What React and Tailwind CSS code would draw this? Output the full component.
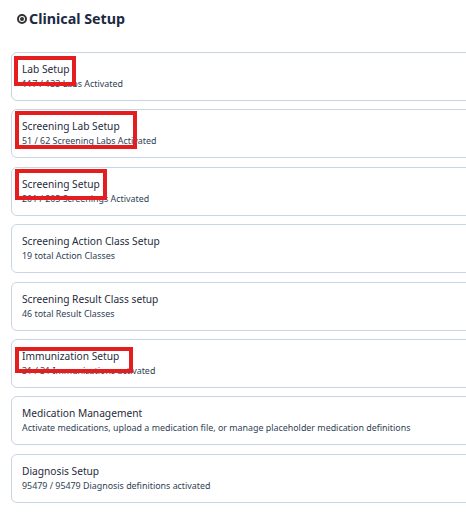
import React from 'react'

const setupItems = [
  { title: 'Lab Setup', detail: '117 / 133 Labs Activated' },
  { title: 'Screening Lab Setup', detail: '51 / 62 Screening Labs Activated' },
  { title: 'Screening Setup', detail: '201 / 205 Screenings Activated' },
  { title: 'Screening Action Class Setup', detail: '19 total Action Classes' },
  { title: 'Screening Result Class setup', detail: '46 total Result Classes' },
  { title: 'Immunization Setup', detail: '31 / 31 Immunizations activated' },
  { title: 'Medication Management', detail: 'Activate medications, upload a medication file, or manage placeholder medication definitions' },
  { title: 'Diagnosis Setup', detail: '95479 / 95479 Diagnosis definitions activated' },
]

// highlighted labels: [left, top, width, height]
const highlights = [
  [14, 56, 62, 30],
  [15, 111, 122, 38],
  [15, 169, 92, 31],
  [15, 347, 118, 26],
]

function SetupCard({ title, detail }) {
  return (
    <div className="w-[470px] h-[49px] rounded-md border border-[#c9d5e4] bg-white pl-[10px] pt-[9px] cursor-pointer">
      <div className="text-[10.2px] leading-[14px] text-[#1f2b3d]">{title}</div>
      <div className="mt-[1px] text-[8.9px] leading-[13px] text-[#2f3f55]">{detail}</div>
    </div>
  )
}

export default function App() {
  return (
    <div className="relative w-[466px] h-[518px] overflow-hidden bg-white font-['Noto_Sans',sans-serif]">
      {/* Header */}
      <div className="flex items-center h-[38px] pl-[17px]">
        <span className="flex items-center justify-center w-[10px] h-[10px] rounded-full border-2 border-[#333] mr-[2px]">
          <span className="w-[4px] h-[4px] rounded-full bg-[#333]" />
        </span>
        <h1 className="text-[14.3px] font-bold text-[#1b2a42]">Clinical Setup</h1>
      </div>

      {/* Setup list */}
      <div className="flex flex-col gap-[8.4px] pl-[11px] pt-[14px]">
        {setupItems.map((item) => (
          <SetupCard key={item.title} {...item} />
        ))}
      </div>

      {highlights.map(([l, t, w, h], i) => (
        <div
          key={i}
          className="absolute border-4 border-[#e41e1e] pointer-events-none"
          style={{ left: l, top: t, width: w, height: h }}
        />
      ))}
    </div>
  )
}
